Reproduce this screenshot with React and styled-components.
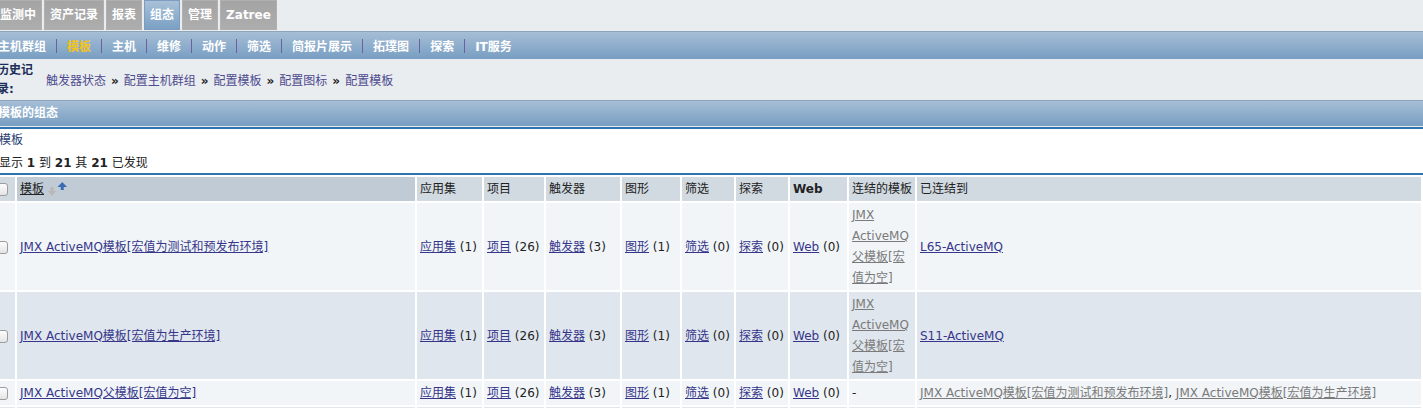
import React from "react";
import styled, { createGlobalStyle } from "styled-components";

const GlobalStyle = createGlobalStyle`
  html, body {
    margin: 0;
    padding: 0;
    overflow: hidden;
    background: #e9edf0;
  }
  body {
    font-family: "DejaVu Sans", "Noto Sans CJK SC", sans-serif;
    font-size: 12px;
    color: #222;
  }
`;

const Page = styled.div`
  margin-left: -6px;
`;

// top tabs
const MainMenu = styled.ul`
  display: flex;
  gap: 2px;
  margin: 0;
  padding: 0;
  list-style: none;
  height: 30px;
`;

const Tab = styled.li`
  box-sizing: border-box;
  height: 30px;
  line-height: 28px;
  padding: 0 5px;
  font-weight: bold;
  color: #fff;
  border: 1px solid ${(p) => (p.$active ? "#7d9cc0" : "#b0b0b0")};
  background: ${(p) =>
    p.$active
      ? "linear-gradient(#a9c1d8, #7aa0c4)"
      : "linear-gradient(#a4a4a4, #adadad)"};
`;

const SubMenu = styled.div`
  margin-top: 1px;
  height: 27px;
  border-top: 1px solid #8ea4bb;
  background: linear-gradient(#a6bed6, #789ec2);
  display: flex;
  align-items: center;
  padding-left: 4px;
  font-weight: bold;
  color: #fff;
`;

const SubItem = styled.span`
  color: ${(p) => (p.$active ? "#f5c518" : "#fff")};
`;

const SubSep = styled.span`
  width: 1px;
  height: 14px;
  margin: 0 10px;
  background: #6e5ea2;
`;

const Breadcrumbs = styled.div`
  height: 41px;
  display: flex;
  align-items: center;
`;

const HistoryLabel = styled.div`
  width: 40px;
  padding-left: 3px;
  margin-right: 9px;
  line-height: 19px;
  font-weight: bold;
  color: #1d2f58;
`;

const Crumb = styled.a`
  color: #4f4a8e;
  text-decoration: none;
`;

const CrumbSep = styled.span`
  font-weight: bold;
  color: #222;
  margin: 0 5px;
`;

const TitleBar = styled.div`
  height: 25px;
  line-height: 25px;
  border-top: 1px solid #8ea4bb;
  background: linear-gradient(#a6bed6, #789ec2);
  padding-left: 4px;
  font-weight: bold;
  color: #fff;
`;

const Panel = styled.div`
  margin-top: 1px;
  border-top: 2px solid #2f72b0;
  background: #fff;
`;

const PanelTitle = styled.div`
  padding-left: 5px;
  line-height: 22px;
  color: #1f3c72;
`;

const Found = styled.div`
  padding-left: 5px;
  margin-top: 3px;
  line-height: 19px;
  color: #222;

  & b {
    font-weight: bold;
  }
`;

const TableWrap = styled.div`
  border-top: 2px solid #2f72b0;
`;

const Table = styled.table`
  table-layout: fixed;
  border-collapse: separate;
  border-spacing: 2px;
  margin-left: -4px;
  width: calc(100% + 4px);
  font-size: 12px;
`;

const Th = styled.th`
  width: ${(p) => (p.$w ? `${p.$w}px` : "auto")};
  padding: 2px 3px 1px;
  line-height: 21px;
  text-align: left;
  font-weight: ${(p) => (p.$bold ? "bold" : "normal")};
  color: #222;
  background: ${(p) => (p.$sorted ? "#c0cbd5" : "#d1d9e1")};
  white-space: nowrap;
`;

const Tr = styled.tr`
  background: ${(p) => (p.$odd ? "#e0e6ed" : "#f1f5f8")};
`;

const Td = styled.td`
  padding: 2px 3px 1px;
  line-height: 21px;
  vertical-align: middle;
  white-space: ${(p) => (p.$wrap ? "normal" : "nowrap")};
  color: #222;
`;

const Link = styled.a`
  color: ${(p) => (p.$muted ? "#7a7a7a" : "#35358a")};
  text-decoration: underline;
  cursor: pointer;
`;

const SortLink = styled.a`
  color: #222;
  text-decoration: underline;
`;

const Check = styled.input.attrs({ type: "checkbox" })`
  appearance: none;
  display: block;
  box-sizing: border-box;
  width: 13px;
  height: 13px;
  margin: 0;
  border: 1px solid #9c9c9c;
  border-radius: 3px;
  background: linear-gradient(#fdfdfd, #e4e4e4);
`;

const Arrows = styled.svg`
  vertical-align: -4px;
  margin-left: 4px;
`;

const SortArrows = () => (
  <Arrows width="20" height="16" viewBox="0 0 20 16">
    <rect x="2.5" y="6" width="3" height="5" fill="#b8b8b8" />
    <polygon points="0,10 8,10 4,15" fill="#b8b8b8" />
    <polygon points="9.5,6 19,6 14.25,1" fill="#3a6cb4" />
    <rect x="12.75" y="5" width="3" height="4" fill="#3a6cb4" />
  </Arrows>
);

const tabs = ["监测中", "资产记录", "报表", "组态", "管理", "Zatree"];
const subs = [
  "主机群组",
  "模板",
  "主机",
  "维修",
  "动作",
  "筛选",
  "简报片展示",
  "拓璞图",
  "探索",
  "IT服务",
];
const crumbs = ["触发器状态", "配置主机群组", "配置模板", "配置图标", "配置模板"];

const counts = [
  ["应用集", 1],
  ["项目", 26],
  ["触发器", 3],
  ["图形", 1],
  ["筛选", 0],
  ["探索", 0],
  ["Web", 0],
];

const rows = [
  {
    name: "JMX ActiveMQ模板[宏值为测试和预发布环境]",
    parents: ["JMX ActiveMQ父模板[宏值为空]"],
    linkedTo: [{ text: "L65-ActiveMQ" }],
  },
  {
    name: "JMX ActiveMQ模板[宏值为生产环境]",
    parents: ["JMX ActiveMQ父模板[宏值为空]"],
    linkedTo: [{ text: "S11-ActiveMQ" }],
  },
  {
    name: "JMX ActiveMQ父模板[宏值为空]",
    parents: [],
    linkedTo: [
      { text: "JMX ActiveMQ模板[宏值为测试和预发布环境]", muted: true },
      { text: "JMX ActiveMQ模板[宏值为生产环境]", muted: true },
    ],
  },
];

const App = () => {
  return (
    <Page>
      <GlobalStyle />
      <MainMenu>
        {tabs.map((t) => (
          <Tab key={t} $active={t === "组态"}>
            {t}
          </Tab>
        ))}
      </MainMenu>

      <SubMenu>
        {subs.map((s, i) => (
          <React.Fragment key={s}>
            {i > 0 && <SubSep />}
            <SubItem $active={s === "模板"}>{s}</SubItem>
          </React.Fragment>
        ))}
      </SubMenu>

      <Breadcrumbs>
        <HistoryLabel>历史记录:</HistoryLabel>
        <div>
          {crumbs.map((c, i) => (
            <React.Fragment key={i}>
              {i > 0 && <CrumbSep>»</CrumbSep>}
              <Crumb>{c}</Crumb>
            </React.Fragment>
          ))}
        </div>
      </Breadcrumbs>

      <TitleBar>模板的组态</TitleBar>

      <Panel>
        <PanelTitle>模板</PanelTitle>
        <Found>
          显示 <b>1</b> 到 <b>21</b> 其 <b>21</b> 已发现
        </Found>
        <TableWrap>
          <Table>
            <thead>
              <tr>
                <Th $w={17}>
                  <Check />
                </Th>
                <Th $w={392} $sorted>
                  <SortLink>模板</SortLink>
                  <SortArrows />
                </Th>
                <Th $w={59}>应用集</Th>
                <Th $w={54}>项目</Th>
                <Th $w={68}>触发器</Th>
                <Th $w={52}>图形</Th>
                <Th $w={46}>筛选</Th>
                <Th $w={46}>探索</Th>
                <Th $w={51} $bold>
                  Web
                </Th>
                <Th $w={60}>连结的模板</Th>
                <Th>已连结到</Th>
              </tr>
            </thead>
            <tbody>
              {rows.map((r, i) => (
                <Tr key={i} $odd={i % 2 === 1}>
                  <Td>
                    <Check />
                  </Td>
                  <Td>
                    <Link>{r.name}</Link>
                  </Td>
                  {counts.map(([label, n]) => (
                    <Td key={label}>
                      <Link>{label}</Link> ({n})
                    </Td>
                  ))}
                  <Td $wrap>
                    {r.parents.length
                      ? r.parents.map((p) => (
                          <Link key={p} $muted>
                            {p}
                          </Link>
                        ))
                      : "-"}
                  </Td>
                  <Td>
                    {r.linkedTo.map((l, j) => (
                      <React.Fragment key={j}>
                        {j > 0 && ", "}
                        <Link $muted={l.muted}>{l.text}</Link>
                      </React.Fragment>
                    ))}
                  </Td>
                </Tr>
              ))}
              <Tr $odd>
                <Td>&nbsp;</Td>
                <Td />
                <Td />
                <Td />
                <Td />
                <Td />
                <Td />
                <Td />
                <Td />
                <Td />
                <Td />
              </Tr>
            </tbody>
          </Table>
        </TableWrap>
      </Panel>
    </Page>
  );
};

export default App;
